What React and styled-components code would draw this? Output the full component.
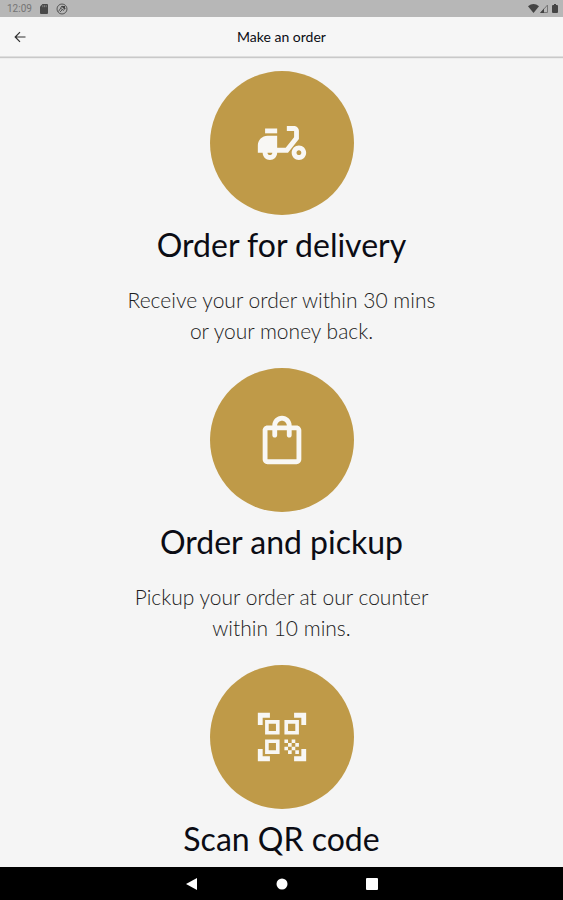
import React from "react";
import styled, { createGlobalStyle } from "styled-components";
import { MdOutlineShoppingBag, MdQrCodeScanner } from "react-icons/md";

const GlobalStyle = createGlobalStyle`
  * { box-sizing: border-box; }
  body {
    margin: 0;
    background: #f5f5f5;
    color: #0b0c14;
    font-family: Lato, "Open Sans", sans-serif;
  }
`;

const Screen = styled.div`
  min-height: 100vh;
  display: flex;
  flex-direction: column;
`;

const StatusBar = styled.div`
  height: 17px;
  padding: 0 5px 0 7px;
  display: flex;
  align-items: center;
  justify-content: space-between;
  background: #b7b7b7;
  color: #757575;
  font: 10px/17px Roboto, sans-serif;
`;

const StatusGroup = styled.div`
  display: flex;
  align-items: center;
  gap: ${(p) => p.$gap}px;
`;

const Header = styled.header`
  height: 40px;
  padding: 0 12px;
  display: grid;
  grid-template-columns: 16px 1fr 16px;
  align-items: center;
  background: #f6f6f6;
  border-bottom: 1px solid #dedede;
  box-shadow: 0 1px 1px #c9c9c9;
`;

const PageTitle = styled.h1`
  margin: 0;
  text-align: center;
  font-size: 14px;
  font-weight: 400;
  line-height: 20px;
`;

const BackButton = styled.button`
  width: 16px;
  height: 16px;
  padding: 0;
  border: 0;
  background: none;
  color: #303030;
  display: grid;
  place-items: center;
  cursor: pointer;
`;

const Options = styled.main`
  flex: 1;
  padding-top: 14px;
  display: flex;
  flex-direction: column;
  align-items: center;
  gap: 22px;
`;

const Option = styled.section`
  display: flex;
  flex-direction: column;
  align-items: center;
  text-align: center;
`;

const OptionButton = styled.button`
  width: 144px;
  height: 144px;
  padding: 0;
  border: 0;
  border-radius: 50%;
  background: #bf9a48;
  color: #f8f7f4;
  display: grid;
  place-items: center;
  cursor: pointer;
`;

const OptionTitle = styled.h2`
  margin: 10px 0 0;
  font-size: 32px;
  font-weight: 400;
  line-height: 40px;
`;

const OptionText = styled.p`
  max-width: 320px;
  margin: 19px 0 0;
  color: #1c1c1c;
  font-size: 21px;
  font-weight: 300;
  line-height: 31px;
`;

const NavBar = styled.nav`
  height: 33px;
  display: flex;
  justify-content: center;
  align-items: center;
  gap: 74px;
  background: #000;
`;

const NavButton = styled.button`
  width: 16px;
  height: 16px;
  padding: 0;
  border: 0;
  background: none;
  color: #fff;
  display: grid;
  place-items: center;
  cursor: pointer;
`;

const MopedIcon = () => (
  <svg width="58" height="58" viewBox="0 0 24 24" fill="currentColor" aria-hidden="true">
    <path d="M5 6h5v2H5z" />
    <path
      fillRule="evenodd"
      d="M19 7c0-1.1-.9-2-2-2h-3v2h3v2.65L13.52 14H10V9H6c-2.21 0-4 1.79-4 4v3h2c0 1.66 1.34 3 3 3s3-1.34 3-3h4.48L19 10.35V7zM7 17c-.55 0-1-.45-1-1h2c0 .55-.45 1-1 1z"
    />
    <path
      fillRule="evenodd"
      d="M19 13c-1.66 0-3 1.34-3 3s1.34 3 3 3 3-1.34 3-3-1.34-3-3-3zm0 4c-.55 0-1-.45-1-1s.45-1 1-1 1 .45 1 1-.45 1-1 1z"
    />
  </svg>
);

const BackIcon = () => (
  <svg width="12" height="12" viewBox="0 0 12 12" fill="none" stroke="currentColor" strokeWidth="1.2" aria-hidden="true">
    <path d="M11.5 6H1.5M6 1.2L1.2 6 6 10.8" />
  </svg>
);

const CardIcon = () => (
  <svg width="8" height="10" viewBox="0 0 8 10" aria-hidden="true">
    <path fill="#484848" d="M2.5 0H7q1 0 1 1v8q0 1-1 1H1q-1 0-1-1V2.5z" />
    <path stroke="#999" strokeWidth=".7" d="M2.8 1.2v2M4.5 1.2v2M6.2 1.2v2" />
  </svg>
);

const SyncIcon = () => (
  <svg width="12" height="12" viewBox="0 0 12 12" fill="none" stroke="#555" aria-hidden="true">
    <circle cx="6" cy="6" r="5" />
    <path d="M2.5 8.5L6 3l3.5 2.5M4 5l4 2.5M4 9l2-2" />
    <path fill="#444" stroke="none" d="M5 3h4v4z" />
  </svg>
);

const WifiIcon = () => (
  <svg width="11" height="9" viewBox="0 0 11 9" aria-hidden="true">
    <path fill="#444" d="M0 2.2Q5.5-2 11 2.2L5.5 9z" />
  </svg>
);

const SignalIcon = () => (
  <svg width="8" height="9" viewBox="0 0 8 9" aria-hidden="true">
    <path fill="none" stroke="#777" d="M7.5 1v7.5H.8z" />
    <path fill="#444" d="M0 9l4-4.5V9z" />
  </svg>
);

const BatteryIcon = () => (
  <svg width="6" height="9" viewBox="0 0 6 9" aria-hidden="true">
    <path fill="#444" d="M2 0h2v1h1q1 0 1 1v6q0 1-1 1H1Q0 9 0 8V2q0-1 1-1h1z" />
  </svg>
);

const options = [
  {
    title: "Order for delivery",
    text: "Receive your order within 30 mins or your money back.",
    icon: <MopedIcon />,
  },
  {
    title: "Order and pickup",
    text: "Pickup your order at our counter within 10 mins.",
    icon: <MdOutlineShoppingBag size={58} aria-hidden="true" />,
  },
  {
    title: "Scan QR code",
    icon: <MdQrCodeScanner size={58} aria-hidden="true" />,
  },
];

const navItems = [
  { label: "Back", shape: <path d="M13 2v12L2 8z" /> },
  { label: "Home", shape: <circle cx="8" cy="8" r="5.5" /> },
  { label: "Recent apps", shape: <rect x="2" y="2" width="12" height="12" rx="1" /> },
];

export default function App() {
  return (
    <Screen>
      <GlobalStyle />
      <StatusBar>
        <StatusGroup $gap={8}>
          <span>12:09</span>
          <CardIcon />
          <SyncIcon />
        </StatusGroup>
        <StatusGroup $gap={4}>
          <StatusGroup $gap={1}>
            <WifiIcon />
            <SignalIcon />
          </StatusGroup>
          <BatteryIcon />
        </StatusGroup>
      </StatusBar>
      <Header>
        <BackButton aria-label="Go back">
          <BackIcon />
        </BackButton>
        <PageTitle>Make an order</PageTitle>
      </Header>
      <Options>
        {options.map(({ title, text, icon }) => (
          <Option key={title}>
            <OptionButton aria-label={title}>{icon}</OptionButton>
            <OptionTitle>{title}</OptionTitle>
            {text && <OptionText>{text}</OptionText>}
          </Option>
        ))}
      </Options>
      <NavBar aria-label="System">
        {navItems.map(({ label, shape }) => (
          <NavButton key={label} aria-label={label}>
            <svg width="16" height="16" viewBox="0 0 16 16" fill="currentColor" aria-hidden="true">
              {shape}
            </svg>
          </NavButton>
        ))}
      </NavBar>
    </Screen>
  );
}
